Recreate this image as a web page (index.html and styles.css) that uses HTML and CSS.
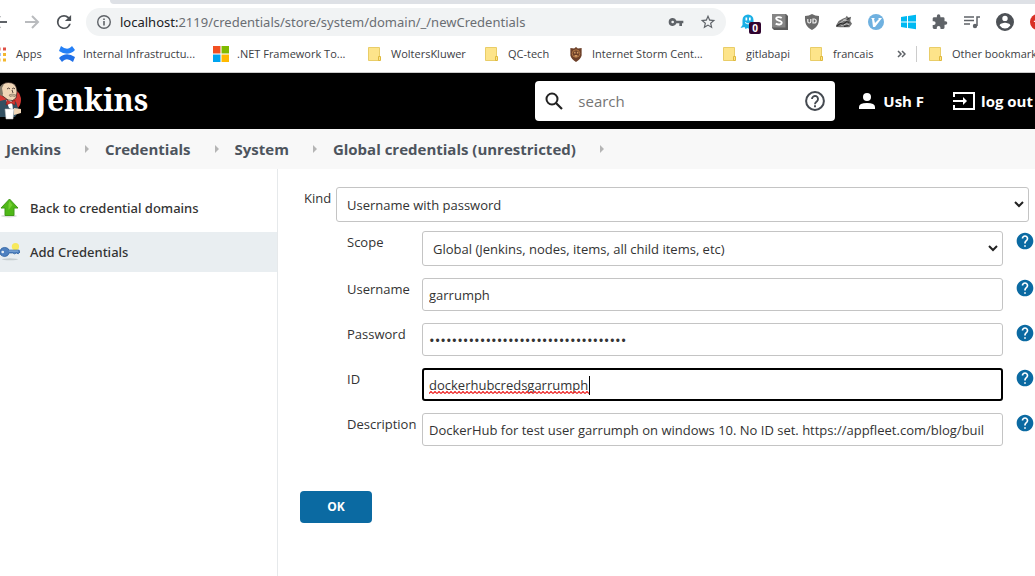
FILE: index.html
```html
<!DOCTYPE html>
<html lang="en">
<head>
<meta charset="utf-8">
<title>Add Credentials [Jenkins]</title>
<link rel="stylesheet" href="styles.css">
</head>
<body>
<svg class="symbols" aria-hidden="true">
  <symbol id="folder" viewBox="0 0 14 15"><path fill="#fde48a" stroke="#e9cd68" d="M.5.5h11v13H.5z"/><path fill="#fde48a" stroke="#dfb93c" d="M10.5 9.5h2v4h-2z"/></symbol>
  <symbol id="help" viewBox="0 0 24 24"><path fill="currentColor" d="M12 2C6.480 2 2 6.480 2 12s4.480 10 10 10 10-4.480 10-10S17.520 2 12 2zm1 17h-2v-2h2v2zm2.070-7.750l-.9.920C13.450 12.900 13 13.500 13 15h-2v-.5c0-1.100.45-2.100 1.170-2.830l1.240-1.260c.37-.36.590-.86.590-1.410 0-1.100-.9-2-2-2s-2 .9-2 2H8c0-2.210 1.790-4 4-4s4 1.790 4 4c0 .88-.36 1.680-.93 2.250z"/></symbol>
</svg>
<div class="browser">
  <div class="tabstrip"></div>
  <div class="toolbar">
    <button class="tool back" aria-label="Back"><svg viewBox="0 0 16 16"><path fill="none" stroke="#5f6368" stroke-width="2" d="M15 8H2M8 2L2 8l6 6"/></svg></button>
    <button class="tool" aria-label="Forward"><svg viewBox="0 0 16 16"><path fill="none" stroke="#b9bbbe" stroke-width="2" d="M1 8h13M8 2l6 6-6 6"/></svg></button>
    <button class="tool reload" aria-label="Reload"><svg viewBox="3 3 18 18"><path fill="#4d5156" d="M17.650 6.350A7.960 7.960 0 0 0 12 4a8 8 0 1 0 7.730 10h-2.080A6 6 0 1 1 12 6c1.660 0 3.140.69 4.220 1.780L13 11h7V4z"/></svg></button>
    <div class="address">
      <svg class="info" viewBox="0 0 16 16"><circle cx="8" cy="8" r="6.300" fill="none" stroke="#5f6368" stroke-width="1.400"/><path fill="#5f6368" d="M7.200 7h1.600v4.500H7.200zM7.200 4.400h1.600V6H7.200z"/></svg>
      <span class="url"><b>localhost:</b>2119/credentials/store/system/domain/_/newCredentials</span>
      <button class="tool" aria-label="Passwords"><svg viewBox="0 0 24 24"><path fill="#5f6368" d="M12.650 10A6 6 0 0 0 1 12a6 6 0 0 0 11.650 2H17v4h4v-4h2v-4zM7 14a2 2 0 1 1 0-4 2 2 0 0 1 0 4z"/></svg></button>
      <button class="tool" aria-label="Bookmark"><svg viewBox="1 1 22 22"><path fill="#5f6368" d="M22 9.240l-7.190-.62L12 2 9.190 8.630 2 9.240l5.460 4.730L5.820 21 12 17.270 18.180 21l-1.630-7.030zM12 15.400l-3.760 2.270 1-4.280-3.320-2.880 4.380-.38L12 6.100l1.710 4.040 4.380.38-3.320 2.880 1 4.280z"/></svg></button>
    </div>
    <div class="extensions">
      <button class="tool ghost" aria-label="Ghostery"><svg viewBox="0 0 16 16"><path fill="#1bb0e6" d="M2.500 11V6a5.500 5.500 0 0 1 11 0v5l1 3-3-1-2 2-2-1-2 1-1-2-4 1z"/><path fill="#fff" d="M5.500 3.500h1.700v3H5.500zM9 3.500h1.700v3H9z"/><path fill="none" stroke="#fff" d="M5 8.500q3 3 6 0"/></svg><span class="count">0</span></button>
      <button class="tool" aria-label="Extension S"><svg viewBox="0 0 16 16"><path fill="#5c5c5c" d="M0 0h14l2 2v14H2l-2-2z"/><path fill="#858585" d="M0 0h13.500v13.500H0z"/><path fill="none" stroke="#fff" stroke-width="1.900" d="M9.700 4C8 2.600 4.200 2.800 4.200 4.800S9.700 6.300 9.700 8.600s-3.500 2.500-6 1"/></svg></button>
      <button class="tool" aria-label="uBlock"><svg viewBox="0 0 16 16"><path fill="#6b6b6b" d="M8 0q3 2 7 2c.3 7-1 11-7 14C2 13 .7 9 1 2q4 0 7-2z"/><path fill="none" stroke="#eee" stroke-width="1.200" d="M3.800 5v2.500a1.500 1.500 0 0 0 3 0V5M9 5v4h1.200a2 2 0 0 0 0-4z"/></svg></button>
      <button class="tool" aria-label="Badger"><svg viewBox="0 0 18 16"><path fill="#707070" d="M0 12l3-5 5-3 3-1 1-2 2 2 3-1-1 5 2 3-3 4H5l-5-.5z"/><path fill="none" stroke="#cfcfcf" d="M3 10l6-4 4 1M6 12l6-2 3 1M8 6l5-2"/><path fill="none" stroke="#292929" stroke-width="1.200" d="M1 12.500l4-3 3 1 4-3 3 1M9 13l5-1M12 5l3-1"/></svg></button>
      <button class="tool" aria-label="Vimium"><svg viewBox="0 0 16 16"><circle cx="8" cy="8" r="8" fill="#6fb1e0"/><path fill="#fff" d="M3 4h4L6 5l1 4 4-4-1-1h4L7 13H5L4 5z"/></svg></button>
      <button class="tool" aria-label="Windows"><svg viewBox="0 0 16 16"><path fill="#00b9f2" d="M1 3l6-.9v5.500H1zM8 2l8-1.200v6.800H8zM1 8.500h6V14l-6-.9zM8 8.500h8v6.800L8 14.100z"/></svg></button>
      <button class="tool" aria-label="Extensions"><svg viewBox="1 1 23 22"><path fill="#5f6368" d="M20.500 11H19V7a2 2 0 0 0-2-2h-4V3.500a2.500 2.500 0 0 0-5 0V5H4a2 2 0 0 0-2 2v3.800h1.500a2.700 2.700 0 0 1 0 5.400H2V20a2 2 0 0 0 2 2h3.800v-1.500a2.700 2.700 0 0 1 5.400 0V22H17a2 2 0 0 0 2-2v-4h1.500a2.500 2.500 0 0 0 0-5z"/></svg></button>
      <button class="tool" aria-label="Media"><svg viewBox="0 0 16 16"><path fill="none" stroke="#5f6368" stroke-width="1.500" d="M0 3h10M0 6.500h10M0 10h6M16 3h-3v9"/><circle cx="11" cy="12" r="2.200" fill="#5f6368"/></svg></button>
      <button class="tool profile" aria-label="Profile"><svg viewBox="2 2 20 20"><path fill="#4d5156" d="M12 2a10 10 0 1 0 0 20 10 10 0 0 0 0-20zm0 3a3 3 0 1 1 0 6 3 3 0 0 1 0-6zm0 14.200a7.200 7.200 0 0 1-6-3.220c.03-1.990 4-3.080 6-3.080s5.970 1.090 6 3.080a7.200 7.200 0 0 1-6 3.220z"/></svg></button>
      <button class="tool" aria-label="Update"><svg viewBox="0 0 16 16"><circle cx="8" cy="8" r="8" fill="#d93025"/><path fill="#fff" d="M8 3l4.500 5H10v4H6V8H3.500z"/></svg></button>
    </div>
  </div>
  <nav class="bookmarks" aria-label="Bookmarks">
    <a href="#" class="bm-apps"><svg viewBox="0 0 14 14"><path fill="#df4f44" d="M0 0h3v3H0zM5.500 0h3v3h-3zM11 0h3v3h-3z"/><path fill="#4285f4" d="M0 5.500h3v3H0zM5.500 5.500h3v3h-3z"/><path fill="#f3b72f" d="M11 5.500h3v3h-3zM5.500 11h3v3h-3zM11 11h3v3h-3z"/></svg>Apps</a>
    <a href="#" class="bm-infra"><svg viewBox="0 0 16 16"><path fill="#2580f7" d="M2 0q6 5 10 1l1-1 3 4q-7 7-16 1z"/><path fill="#2070e8" d="M14 16q-6-5-10-1l-1 1-3-4q7-7 16-1z"/></svg>Internal Infrastructu...</a>
    <a href="#" class="bm-net"><svg viewBox="0 0 15 15"><path fill="#f25022" d="M0 0h7v7H0z"/><path fill="#7fba00" d="M8 0h7v7H8z"/><path fill="#00a4ef" d="M0 8h7v7H0z"/><path fill="#ffb900" d="M8 8h7v7H8z"/></svg>.NET Framework To...</a>
    <a href="#" class="bm-wk"><svg><use href="#folder"/></svg>WoltersKluwer</a>
    <a href="#" class="bm-qc"><svg><use href="#folder"/></svg>QC-tech</a>
    <a href="#" class="bm-storm"><svg viewBox="0 0 14 16"><path fill="#6d4029" d="M7 0l2 1.500L13 1v8q-1 4-6 7-5-3-6-7V1l4 .5z"/><circle cx="7" cy="7" r="4" fill="none" stroke="#b57b45"/><path fill="#d39b64" d="M5 5h1.500v2H5zM8 5h1.500v2H8zM5.500 8.500h3v2h-3z"/></svg>Internet Storm Cent...</a>
    <a href="#" class="bm-git"><svg><use href="#folder"/></svg>gitlabapi</a>
    <a href="#" class="bm-fr"><svg><use href="#folder"/></svg>francais</a>
    <button class="more" aria-label="More bookmarks"><svg viewBox="0 0 9 8"><path fill="none" stroke="#5f6368" stroke-width="1.500" d="M1 1l3 3-3 3M5 1l3 3-3 3"/></svg></button>
    <a href="#" class="bm-other"><svg><use href="#folder"/></svg>Other bookmarks</a>
  </nav>
</div>
<header class="header">
  <a href="#" class="brand">
    <svg class="butler" viewBox="0 0 22 38"><circle cx="9" cy="18" r="12" fill="#d33833"/><path fill="#335061" d="M0 19l8-2 8 3 3 9-4 6H0z"/><path fill="#f0d6b7" stroke="#2b1c1b" stroke-width=".7" d="M0 5Q4-1 12 1q5 2 5 9l-1 6q-3 4-8 2L0 12z"/><path fill="#7f7768" d="M0 5Q2 2 4 2L2 6l1 6-1 2-2-1z"/><path fill="none" stroke="#2b1c1b" stroke-width=".8" d="M7 7q2-2 3 0M12 7q2-2 3 0M12 8l1 3"/><path fill="#c9b79c" stroke="#6b5a4a" stroke-width=".5" d="M9 13q3-2 7 0l-1 1.500q-3-1-5 0z"/><path fill="#fff" d="M6 18l6 1 1 9-4-2z"/><path fill="#d33833" stroke="#81100b" stroke-width=".5" d="M7 18l4 2 4-2v5l-4-2-5 2z"/><path fill="#f0d6b7" d="M14 26l7 1v4l-7 2z"/><path fill="#fff" stroke="#bbb" stroke-width=".5" d="M5 27h9l-1 10H6z"/></svg>
    <span>Jenkins</span>
  </a>
  <form class="search">
    <svg viewBox="0 0 18 18"><circle cx="7" cy="7" r="5.500" fill="none" stroke="#222" stroke-width="2"/><path stroke="#222" stroke-width="2.200" d="M11 11l6 6"/></svg>
    <input type="text" placeholder="search" aria-label="Search">
    <a href="#" aria-label="Search help"><svg viewBox="0 0 20 20"><circle cx="10" cy="10" r="8.900" fill="none" stroke="#444950" stroke-width="2"/><path fill="none" stroke="#444950" stroke-width="1.900" d="M7 8a3 3 0 1 1 5 2.200c-1.200 1-2 1.500-2 3M10 14.300v2"/></svg></a>
  </form>
  <a href="#" class="user"><svg viewBox="0 0 16 16"><circle cx="8" cy="4" r="4" fill="#fff"/><path fill="#fff" d="M0 16v-2q0-4 8-4t8 4v2z"/></svg>Ush F</a>
  <a href="#" class="logout"><svg viewBox="0 0 22 18"><path fill="none" stroke="#fff" stroke-width="2" d="M1 5V1h20v16H1v-4M0 9h12"/><path fill="#fff" d="M10 5l4 4-4 4z"/></svg>log out</a>
</header>
<nav class="crumbs" aria-label="Breadcrumb">
  <a href="#">Jenkins</a><a href="#">Credentials</a><a href="#">System</a><a href="#">Global credentials (unrestricted)</a>
</nav>
<div class="page">
  <aside class="side">
    <a href="#"><svg viewBox="0 0 20 20"><ellipse cx="9" cy="18" rx="8" ry="1.500" fill="#ddd"/><path fill="#4fb817" stroke="#419a18" d="M9.500 1l8.500 9h-4v7.500H5V10H1z"/><path fill="#74cf31" d="M9.500 3l3 4-4 5V6z"/></svg>Back to credential domains</a>
    <a href="#" class="current"><svg viewBox="0 0 22 20"><ellipse cx="11" cy="18" rx="9" ry="1" fill="#c5cdd0"/><circle cx="17" cy="4" r="4" fill="#f7e95c"/><path fill="#4f81c0" stroke="#3467a4" d="M0 9q1-4 5-4 4 0 5 3h11l1 2-2 2-2-1-2 1-2-1h-4q-1 4-5 4-6-1-5-6z"/><circle cx="3" cy="10" r="1.500" fill="#e8eef2"/><path stroke="#8fb5df" d="M10 9h10"/></svg>Add Credentials</a>
  </aside>
  <main>
    <form>
      <div class="kind"><label for="kind">Kind</label>
        <div class="select"><select id="kind"><option>Username with password</option></select><svg viewBox="0 0 10 7"><path d="M1 1l4 4 4-4"/></svg></div></div>
      <div class="fields">
        <div class="row scope"><label for="scope">Scope</label>
          <div class="select"><select id="scope"><option>Global (Jenkins, nodes, items, all child items, etc)</option></select><svg viewBox="0 0 10 7"><path d="M1 1l4 4 4-4"/></svg></div>
          <a href="#" class="help" aria-label="Help: Scope"><svg><use href="#help"/></svg></a></div>
        <div class="row"><label for="username">Username</label><input id="username" type="text" value="garrumph"><a href="#" class="help" aria-label="Help: Username"><svg><use href="#help"/></svg></a></div>
        <div class="row"><label for="password">Password</label><input id="password" type="password" value="abcdefghijklmnopqrstuvwxyzabcdefghi"><a href="#" class="help" aria-label="Help: Password"><svg><use href="#help"/></svg></a></div>
        <div class="row"><label for="cid">ID</label>
          <div class="idbox"><input id="cid" class="active" type="text" value="dockerhubcredsgarrumph" spellcheck="false"><svg class="squiggle" aria-hidden="true"><defs><pattern id="wave" width="4" height="3" patternUnits="userSpaceOnUse"><path fill="none" stroke="#e22" stroke-width="1.200" d="M0 2.500L2 .5l2 2"/></pattern></defs><rect y="15" width="160" height="3" fill="url(#wave)"/><path fill="#000" d="M160 0h1v19h-1z"/></svg></div>
          <a href="#" class="help" aria-label="Help: ID"><svg><use href="#help"/></svg></a></div>
        <div class="row"><label for="description">Description</label><input id="description" type="text" value="DockerHub for test user garrumph on windows 10. No ID set. https://appfleet.com/blog/buil"><a href="#" class="help" aria-label="Help: Description"><svg><use href="#help"/></svg></a></div>
      </div>
      <button type="button" class="ok">OK</button>
    </form>
  </main>
</div>
</body>
</html>
```

FILE: styles.css
```css
* { box-sizing: border-box; }
body {
  margin: 0;
  min-height: 100vh;
  display: flex;
  flex-direction: column;
  overflow: hidden;
  background: #fff;
  color: #333;
  font: 13px/20px "Open Sans", "Noto Sans", sans-serif;
}
a { color: inherit; text-decoration: none; }
svg { display: block; flex: none; }
button { border: 0; padding: 0; background: none; font: inherit; }
.symbols { position: absolute; width: 0; height: 0; }

/* Browser chrome */
.browser { overflow: hidden; border-bottom: 1px solid #ccc; }
.tabstrip { height: 4px; margin-left: 110px; background: #dee1e6; border-bottom-left-radius: 4px; }
.toolbar { display: flex; align-items: center; height: 36px; }
.tool { flex: none; width: 16px; height: 16px; position: relative; }
.tool svg { width: 100%; height: 100%; }
.toolbar > .tool { margin-right: 16px; }
.toolbar > .back { margin-left: -8px; }
.toolbar > .reload { margin-right: 14px; }
.address {
  flex: 1;
  min-width: 0;
  display: flex;
  align-items: center;
  gap: 16px;
  height: 28px;
  padding: 0 10px;
  border-radius: 14px;
  background: #f1f3f4;
}
.info { width: 16px; height: 16px; margin-right: -8px; }
.url { flex: 1; white-space: nowrap; color: #6a6e73; font: 13px/20px "Noto Sans", sans-serif; }
.url b { color: #202124; font-weight: normal; }
.extensions { display: flex; align-items: center; gap: 16px; margin: 0 -11px 0 14px; }
.profile { width: 18px; height: 18px; }
.count {
  position: absolute;
  left: 9px;
  top: 8px;
  width: 12px;
  height: 12px;
  border-radius: 2px;
  background: #30042f;
  color: #fff;
  font: bold 10px/12px "Open Sans", sans-serif;
}
.bookmarks { display: flex; align-items: center; height: 32px; padding-bottom: 4px; font-size: 11px; color: #3c4043; white-space: nowrap; }
.bookmarks a { display: flex; align-items: center; flex: none; }
.bookmarks a svg { width: 14px; height: 15px; margin-right: 9px; }
.bookmarks .bm-apps { width: 67px; margin-left: -8px; }
.bookmarks .bm-apps svg { margin-right: 10px; }
.bookmarks .bm-infra { width: 154px; }
.bookmarks .bm-net { width: 155px; }
.bookmarks .bm-infra svg, .bookmarks .bm-net svg { width: 16px; height: 16px; margin-right: 8px; }
.bookmarks .bm-wk { width: 117px; }
.bookmarks .bm-qc { width: 84px; }
.bookmarks .bm-storm { width: 154px; }
.bookmarks .bm-git { width: 87px; }
.bookmarks .bm-fr { width: 87px; }
.more { flex: none; width: 20px; height: 16px; border-right: 1px solid #ccc; }
.more svg { width: 9px; height: 8px; }
.bookmarks .bm-other { margin-left: 12px; }

/* Jenkins header */
.header { display: flex; align-items: center; height: 56px; padding-right: 2px; background: #000; color: #fff; overflow: hidden; white-space: nowrap; font-size: 15px; font-weight: bold; }
.brand { display: flex; align-items: center; gap: 13px; margin-right: auto; font: bold 30px/32px "Noto Serif", "Liberation Serif", serif; }
.brand span { padding-bottom: 3px; }
.butler { width: 22px; height: 38px; }
.search { display: flex; align-items: center; width: 300px; height: 40px; padding: 0 10px; border-radius: 4px; background: #fff; }
.search > svg { width: 18px; height: 18px; }
.search input { flex: 1; min-width: 0; margin: 0 15px; padding: 0; border: 0; outline: 0; background: none; color: #333; font: 15px/20px "Open Sans", sans-serif; }
.search input::placeholder { color: #757575; }
.search a svg { width: 20px; height: 20px; }
.user, .logout { display: flex; align-items: center; }
.user { gap: 8px; margin-left: 24px; }
.user svg { width: 16px; height: 16px; }
.logout { gap: 6px; margin-left: 29px; }
.logout svg { width: 22px; height: 18px; }
.crumbs { display: flex; align-items: center; height: 40px; padding-left: 6px; background: #f8f8f8; color: #4d545d; font-size: 15px; font-weight: bold; }
.crumbs a { display: flex; align-items: center; }
.crumbs a::after { content: ""; margin: 0 16px 0 24px; border: 4px solid transparent; border-right-width: 0; border-left-color: #b5b5b5; }

/* Page */
.page { flex: 1; display: flex; }
.side { flex: none; width: 278px; padding-top: 19px; border-right: 1px solid #e6e9eb; font-family: "Noto Sans", sans-serif; font-weight: 500; }
.side a { display: flex; align-items: center; gap: 10px; height: 40px; margin-bottom: 4px; }
.side svg { width: 20px; height: 20px; }
.side .current { background: #e9eef1; }
main { flex: 1; min-width: 0; padding: 18px 6px 0 22px; }
label { flex: none; }
.kind { display: flex; padding-left: 4px; }
.kind label { width: 32px; padding-top: 1px; }
.select { position: relative; flex: 1; min-width: 0; }
.select svg { position: absolute; right: 5px; top: 14px; width: 10px; height: 7px; fill: none; stroke: #222; stroke-width: 2; pointer-events: none; }
select, .row input {
  display: block;
  width: 100%;
  border: 1px solid #c4c4c4;
  border-radius: 3px;
  background: #fff;
  color: #333;
  font: 13px/20px "Open Sans", sans-serif;
}
select { appearance: none; height: 35px; padding: 0 20px 0 10px; }
.row input { flex: 1; min-width: 0; height: 33px; padding: 0 6px; }
.row input[type="password"] { font-size: 15px; }
.fields { display: flex; flex-direction: column; gap: 12px; margin: 9px -6px 0 47px; }
.row { display: flex; align-items: flex-start; }
.row label { width: 75px; padding-top: 1px; }
.help { flex: none; margin-left: 12px; color: #0b6aa2; }
.help svg { width: 20px; height: 20px; }
.idbox { position: relative; flex: 1; min-width: 0; }
.row .active { border: 2px solid #000; padding: 0 5px; outline: 0; }
.squiggle { position: absolute; left: 7px; top: 8px; width: 161px; height: 19px; pointer-events: none; }
.ok { width: 72px; height: 32px; margin-top: 45px; border-radius: 4px; background: #0b6aa2; color: #fff; font-size: 12px; font-weight: bold; }
```
